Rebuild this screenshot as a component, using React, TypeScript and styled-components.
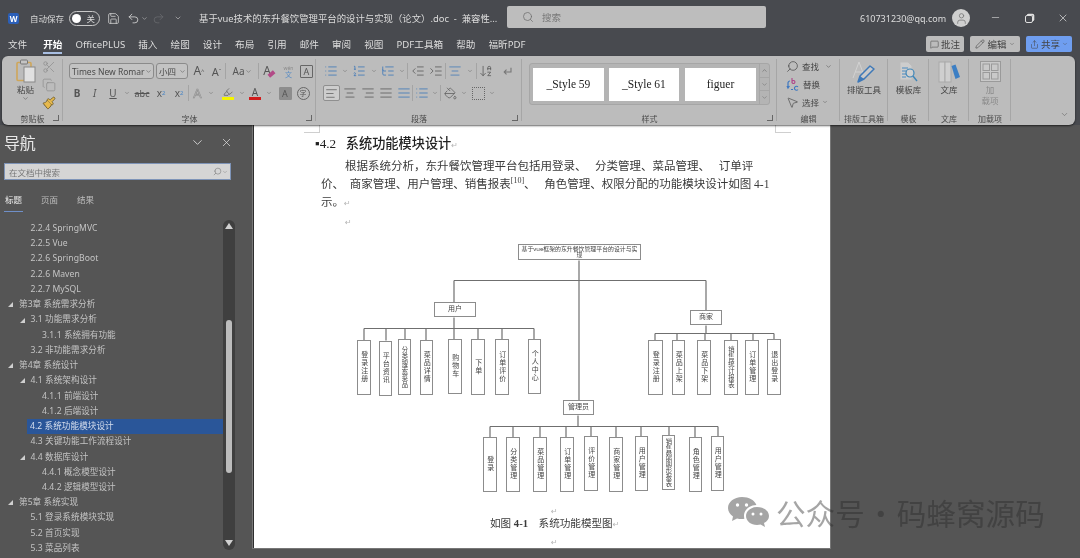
import React from 'react';
import styled, { createGlobalStyle } from 'styled-components';
import {
  AlignCenter,
  AlignJustify,
  AlignLeft,
  AlignRight,
  ArrowDownAZ,
  ChevronDown,
  ChevronUp,
  Copy,
  Highlighter,
  IndentDecrease,
  IndentIncrease,
  List,
  ListOrdered,
  ListTree,
  MessageSquare,
  Minus,
  MousePointer2,
  PaintBucket,
  Paintbrush,
  Pencil,
  Redo2,
  Save,
  Scissors,
  Search,
  Share,
  Undo2,
  User,
  X,
} from 'lucide-react';

const UI_FONT = '"Noto Sans", "Noto Sans CJK SC", sans-serif';
const DOC_FONT = '"Liberation Serif", "Noto Sans CJK SC", serif';

const GlobalStyle = createGlobalStyle`
  html, body { margin: 0; padding: 0; background: #555; }
  * { box-sizing: border-box; }
`;

const Window = styled.div`
  position: relative;
  width: 1080px;
  height: 558px;
  overflow: hidden;
  display: flex;
  flex-direction: column;
  background: #484a4f;
  font-family: ${UI_FONT};
  filter: blur(0.35px);
`;

/* title bar */
const TitleBar = styled.header`
  height: 36px;
  flex: none;
  display: flex;
  align-items: center;
  color: #d8d8d8;
  font-size: 8.5px;
`;

const TitleSlot = styled.div<{ $x: number }>`
  margin-left: ${(p) => p.$x}px;
  display: flex;
  align-items: center;
  flex: none;
`;

const WordBadge = styled.div`
  width: 11px;
  height: 11px;
  background: #2b5fb8;
  border-radius: 2px;
  color: #fff;
  font-size: 8px;
  font-weight: 700;
  line-height: 11px;
  text-align: center;
`;

const Toggle = styled.div`
  width: 31px;
  height: 15px;
  border: 1px solid #c9c9c9;
  border-radius: 8px;
  display: flex;
  align-items: center;
  justify-content: space-between;
  padding: 0 4px 0 2px;
  font-size: 8.5px;
  &::before {
    content: '';
    width: 9px;
    height: 9px;
    border-radius: 50%;
    background: #fff;
  }
`;

const TitleText = styled.div`
  width: 272px;
  font-size: 9.4px;
  white-space: pre;
  color: #dcdcdc;
`;

const SearchBox = styled.div`
  width: 259px;
  height: 22px;
  margin-left: 18px;
  margin-top: -3px;
  background: #bdbdbd;
  border-radius: 2px;
  display: flex;
  align-items: center;
  padding-left: 15px;
  gap: 8px;
  color: #777;
  font-size: 9.5px;
`;

const Email = styled.div`
  margin-left: 94px;
  width: 86px;
  font-size: 9px;
  white-space: nowrap;
  color: #dedede;
`;

const Avatar = styled.div`
  width: 18px;
  height: 18px;
  margin-left: 6px;
  border-radius: 50%;
  background: #cfcfcf;
  color: #777;
  display: flex;
  align-items: center;
  justify-content: center;
`;

const WinButtons = styled.div`
  margin-left: 20px;
  width: 79px;
  display: flex;
  justify-content: space-between;
  color: #e0e0e0;
`;

const RestoreGlyph = styled.div`
  width: 8px;
  height: 8px;
  margin-top: 3px;
  border: 1.3px solid #e0e0e0;
  border-radius: 2px;
  box-shadow: 1.5px -1.5px 0 -0.2px #e0e0e0;
`;

/* tab row */
const TabRow = styled.nav`
  height: 20px;
  flex: none;
  display: flex;
  align-items: flex-start;
  padding: 1px 8px 0;
  gap: 13.1px;
`;

const TabItem = styled.div<{ $active?: boolean }>`
  font-size: 9.6px;
  line-height: 15px;
  height: 17px;
  color: ${(p) => (p.$active ? '#fff' : '#dedede')};
  font-weight: ${(p) => (p.$active ? 700 : 400)};
  border-bottom: 2px solid ${(p) => (p.$active ? '#a9bfe3' : 'transparent')};
  margin-left: ${(p) => (p.$active ? 3 : 0)}px;
`;

const TabActions = styled.div`
  margin-left: auto;
  margin-top: -1px;
  display: flex;
  gap: 6px;
`;

const TabButton = styled.div<{ $w: number; $accent?: boolean }>`
  width: ${(p) => p.$w}px;
  height: 16px;
  border-radius: 2px;
  background: ${(p) => (p.$accent ? '#6f9ef0' : '#bcbcbc')};
  color: #444;
  font-size: 9.5px;
  display: flex;
  align-items: center;
  justify-content: center;
  gap: 2px;
`;

/* ribbon */
const Ribbon = styled.div`
  height: 69px;
  flex: none;
  margin: 0 5px 0 2px;
  background: #bcbcbc;
  border-radius: 6px;
  box-shadow: 0 1px 2px rgba(0, 0, 0, 0.6);
  display: flex;
  position: relative;
  z-index: 2;
  color: #4d4d4d;
  font-size: 8.5px;
`;

const Group = styled.section<{ $w: number }>`
  width: ${(p) => p.$w}px;
  flex: none;
  display: flex;
  flex-direction: column;
  position: relative;
  &::after {
    content: '';
    position: absolute;
    right: 0;
    top: 3px;
    bottom: 4px;
    width: 1px;
    background: #a6a6a6;
  }
`;

const GroupBody = styled.div<{ $pad?: string }>`
  height: 55px;
  padding: ${(p) => p.$pad || '7px 0 0 6px'};
  display: flex;
  flex-direction: column;
  gap: 6px;
`;

const GroupFoot = styled.div`
  height: 14px;
  display: grid;
  grid-template-columns: 1fr auto 1fr;
  align-items: center;
  padding: 0 4px;
  font-size: 8px;
  color: #4a4a4a;
  white-space: nowrap;
`;

const FootLabel = styled.span`
  grid-column: 2;
`;

const Launcher = styled.div`
  grid-column: 3;
  justify-self: end;
  width: 6px;
  height: 6px;
  border-left: 1px solid #666;
  border-bottom: 1px solid #666;
  transform: scaleX(-1);
`;

const ToolRow = styled.div`
  height: 16px;
  display: flex;
  align-items: center;
`;

const Cell = styled.div<{ $w: number; $on?: boolean; $tint?: string }>`
  width: ${(p) => p.$w}px;
  height: 16px;
  flex: none;
  display: flex;
  align-items: center;
  justify-content: center;
  color: ${(p) => p.$tint || '#555'};
  border-radius: 2px;
  ${(p) => (p.$on ? 'background:#cdcdcd;border:1px solid #8f8f8f;' : '')}
`;

const Divider = styled.div`
  width: 1px;
  height: 16px;
  flex: none;
  background: #a4a4a4;
`;

const Select = styled.div<{ $w: number }>`
  width: ${(p) => p.$w}px;
  height: 16px;
  flex: none;
  margin-right: 2px;
  border: 1px solid #8b8b8b;
  border-radius: 3px;
  display: flex;
  align-items: center;
  justify-content: space-between;
  padding: 0 1px 0 2px;
  font-size: 8.5px;
  color: #4a4a4a;
  white-space: nowrap;
  overflow: hidden;
  background: #c3c3c3;
`;

const Glyph = styled.span<{ $size?: number; $weight?: number; $color?: string; $italic?: boolean; $line?: string; $hollow?: boolean }>`
  font-family: ${UI_FONT};
  font-size: ${(p) => p.$size || 10}px;
  font-weight: ${(p) => p.$weight || 400};
  color: ${(p) => (p.$hollow ? 'transparent' : p.$color || '#555')};
  font-style: ${(p) => (p.$italic ? 'italic' : 'normal')};
  text-decoration: ${(p) => p.$line || 'none'};
  line-height: 1;
  ${(p) => (p.$hollow ? '-webkit-text-stroke: 0.6px #8e8e8e;' : '')}
`;

const Tiny = styled.sup<{ $color?: string }>`
  font-size: 6px;
  color: ${(p) => p.$color || '#555'};
`;

const TinySub = styled.sub`
  font-size: 6px;
  color: #4a86c5;
`;

const BarGlyph = styled.div<{ $bar: string }>`
  display: flex;
  flex-direction: column;
  align-items: center;
  font-size: 10px;
  line-height: 10px;
  color: #555;
  width: 12px;
  &::after {
    content: '';
    width: 12px;
    height: 3px;
    background: ${(p) => p.$bar};
  }
`;

const BoxGlyph = styled.div<{ $round?: boolean; $fill?: boolean; $dotted?: boolean }>`
  width: 13px;
  height: 13px;
  border: 1px ${(p) => (p.$dotted ? 'dotted' : 'solid')} ${(p) => (p.$fill ? '#8d8d8d' : '#666')};
  border-radius: ${(p) => (p.$round ? '50%' : '1px')};
  background: ${(p) => (p.$fill ? '#8d8d8d' : 'transparent')};
  color: #555;
  font-size: ${(p) => (p.$round ? 7 : 9)}px;
  line-height: 11px;
  text-align: center;
`;

const RubyGlyph = styled.div`
  display: flex;
  flex-direction: column;
  align-items: center;
  font-size: 5px;
  line-height: 6px;
  color: #888;
  span {
    font-size: 7px;
    line-height: 7px;
    color: #5b8dc4;
  }
`;

const EraserMark = styled.span`
  width: 7px;
  height: 4px;
  margin: 6px 0 0 -3px;
  background: #b24a87;
  transform: rotate(-40deg);
`;

const ClipLayout = styled.div`
  height: 55px;
  padding: 3px 0 0 8px;
  display: flex;
`;

const PasteCol = styled.div`
  width: 31px;
  display: flex;
  flex-direction: column;
  align-items: center;
  line-height: 10px;
  font-size: 8.5px;
  color: #444;
`;

const PasteLabel = styled.div`
  margin-top: 2px;
`;

const ClipTools = styled.div`
  width: 16px;
  display: flex;
  flex-direction: column;
  align-items: center;
  gap: 4px;
  padding-top: 1px;
`;

const Gallery = styled.div`
  width: 241px;
  height: 42px;
  margin: 7px 0 6px 7px;
  border: 1px solid #a6a6a6;
  border-radius: 3px;
  background: #b4b4b4;
  display: flex;
  align-items: center;
  padding-left: 3px;
`;

const StyleCell = styled.div<{ $w: number; $gap: number }>`
  width: ${(p) => p.$w}px;
  margin-right: ${(p) => p.$gap}px;
  height: 33px;
  flex: none;
  background: #fff;
  color: #222;
  font-family: ${DOC_FONT};
  font-size: 11.5px;
  display: flex;
  align-items: center;
  justify-content: center;
`;

const GalleryScroll = styled.div`
  flex: 1;
  align-self: stretch;
  display: flex;
  flex-direction: column;
  border-left: 1px solid #a6a6a6;
`;

const GalleryStep = styled.div`
  flex: 1;
  display: flex;
  align-items: center;
  justify-content: center;
  color: #666;
  border-bottom: 1px solid #a6a6a6;
  &:last-child { border-bottom: none; }
`;

const EditBody = styled.div`
  height: 55px;
  padding: 1px 0 0 9px;
`;

const EditRow = styled.div`
  height: 18px;
  display: flex;
  align-items: center;
  gap: 3px;
  color: #444;
`;

const EditCaret = styled.span`
  display: flex;
  margin-left: 3px;
`;

const MirrorSearch = styled(Search)`
  transform: scaleX(-1);
`;

const BigTool = styled.div<{ $dim?: boolean }>`
  height: 55px;
  padding-top: 5px;
  display: flex;
  flex-direction: column;
  align-items: center;
  line-height: 11px;
  text-align: center;
  color: ${(p) => (p.$dim ? '#8a8a8a' : '#444')};
`;

const BigIcon = styled.div`
  height: 22px;
  margin-bottom: 1px;
  display: flex;
`;

const RibbonEnd = styled.div`
  flex: 1;
  display: flex;
  align-items: flex-end;
  justify-content: flex-end;
  padding: 0 6px 6px 0;
  color: #666;
`;

/* body */
const Workspace = styled.main`
  flex: 1;
  min-height: 0;
  display: flex;
  background: #555;
`;

const NavPane = styled.aside`
  width: 243px;
  flex: none;
  display: flex;
  flex-direction: column;
  color: #c8c8c8;
`;

const NavHead = styled.div`
  height: 38px;
  flex: none;
  display: flex;
  align-items: center;
  padding: 0 10px 4px 4px;
  color: #e6e6e6;
`;

const NavTitle = styled.div`
  font-size: 16px;
  margin-right: auto;
  letter-spacing: -0.3px;
  color: #e8e8e8;
`;

const NavClose = styled(X)`
  margin-left: 15px;
`;

const NavSearch = styled.div`
  width: 227px;
  height: 17px;
  flex: none;
  margin-left: 4px;
  background: #d5d5d5;
  border: 1px solid #7e94b8;
  display: flex;
  align-items: center;
  justify-content: space-between;
  padding: 0 2px 0 4px;
  font-size: 8.5px;
  color: #777;
`;

const NavSearchTools = styled.span`
  display: flex;
  align-items: center;
`;

const NavTabs = styled.div`
  height: 31px;
  flex: none;
  margin-left: 5px;
  display: flex;
  gap: 17px;
  padding-top: 13px;
`;

const NavTab = styled.div<{ $active?: boolean }>`
  font-size: 8.5px;
  line-height: 13px;
  height: 19px;
  width: 19px;
  margin-left: ${(p) => (p.$active ? -1 : 0)}px;
  text-align: center;
  color: ${(p) => (p.$active ? '#ececec' : '#bdbdbd')};
  border-bottom: 1.5px solid ${(p) => (p.$active ? '#6f8fc8' : 'transparent')};
`;

const TreeArea = styled.div`
  flex: 1;
  min-height: 0;
  display: flex;
  padding-top: 10px;
`;

const Tree = styled.ul`
  width: 223px;
  margin: 0;
  padding: 0;
  list-style: none;
  overflow: hidden;
  font-size: 8.6px;
  letter-spacing: 0.05px;
  color: #c4c4c4;
`;

const TreeRow = styled.li<{ $level: number; $selected?: boolean }>`
  height: 15.24px;
  line-height: 15.24px;
  display: flex;
  align-items: center;
  white-space: nowrap;
  margin-left: ${(p) => (p.$selected ? 27 : 0)}px;
  padding-left: ${(p) => (p.$selected ? 3 : 6 + p.$level * 11.5)}px;
  background: ${(p) => (p.$selected ? '#2a5699' : 'transparent')};
  color: ${(p) => (p.$selected ? '#d6dfee' : 'inherit')};
`;

const Twist = styled.span<{ $open?: boolean }>`
  width: 13px;
  flex: none;
  display: flex;
  padding-left: 2px;
  &::before {
    content: '';
    display: ${(p) => (p.$open ? 'block' : 'none')};
    border-left: 5px solid transparent;
    border-bottom: 5px solid #cfcfcf;
  }
`;

const ScrollTrack = styled.div`
  width: 12px;
  height: 330px;
  margin-top: -1px;
  background: #3f3f3f;
  border-radius: 6px;
  display: flex;
  flex-direction: column;
  align-items: center;
  padding-top: 3px;
`;

const ScrollThumb = styled.div`
  width: 6px;
  height: 153px;
  margin-top: 91px;
  margin-bottom: auto;
  background: #bcbcbc;
  border-radius: 3px;
`;

const ScrollCaret = styled.div<{ $down?: boolean }>`
  width: 0;
  height: 0;
  border-left: 4px solid transparent;
  border-right: 4px solid transparent;
  ${(p) => (p.$down ? 'border-top: 6px solid #d0d0d0; margin-bottom: 4px;' : 'border-bottom: 6px solid #d0d0d0;')}
`;

const DocArea = styled.div`
  flex: 1;
  min-width: 0;
  padding-left: 10px;
`;

const Page = styled.article`
  position: relative;
  width: 577px;
  height: 423px;
  background: #fff;
  border-left: 1px solid #2e2e2e;
  box-shadow: 0 0 0 1px #777;
  padding: 8px 0 0 67px;
  font-family: ${DOC_FONT};
  color: #3a3a3a;
`;

const CropMark = styled.div<{ $right?: boolean }>`
  position: absolute;
  top: 0;
  width: 16px;
  height: 8px;
  border-bottom: 1px solid #cfcfcf;
  ${(p) =>
    p.$right
      ? 'left: 521px; border-left: 1px solid #cfcfcf;'
      : 'left: 50px; border-right: 1px solid #cfcfcf;'}
`;

const Mark = styled.span`
  font-family: "DejaVu Sans", sans-serif;
  font-size: 8px;
  color: #b5b5b5;
  font-weight: 400;
`;

const Heading = styled.h2`
  margin: 0 0 3px -6px;
  height: 21px;
  line-height: 21px;
  font-size: 13.2px;
  font-weight: 500;
  white-space: pre;
  color: #222;
`;

const HeadingNumber = styled.span`
  margin-right: 3px;
`;

const BodyLine = styled.p<{ $indent?: boolean }>`
  margin: 0;
  height: 18.2px;
  line-height: 18.2px;
  font-size: 11.5px;
  white-space: pre;
  padding-left: ${(p) => (p.$indent ? 24 : 0)}px;
  sup {
    font-size: 8px;
    line-height: 0;
  }
`;

const Diagram = styled.figure`
  position: relative;
  margin: 0 0 0 -67px;
  height: 271px;
  width: 577px;
  font-family: ${UI_FONT};
`;

const Wires = styled.svg`
  position: absolute;
  left: 0;
  top: 0;
`;

const NodeBox = styled.div<{ $x: number; $y: number; $w: number; $h: number; $v?: boolean; $tight?: boolean; $small?: boolean }>`
  position: absolute;
  left: ${(p) => p.$x}px;
  top: ${(p) => p.$y}px;
  width: ${(p) => p.$w}px;
  height: ${(p) => p.$h}px;
  background: #fff;
  border: 1.5px solid #8c8c8c;
  display: flex;
  align-items: center;
  justify-content: center;
  text-align: center;
  padding: ${(p) => (p.$small ? '0 1px' : '0')};
  font-size: ${(p) => (p.$small ? 5.9 : p.$tight ? 6.3 : 7)}px;
  line-height: ${(p) => (p.$small ? 6 : 7.6)}px;
  color: #444;
  ${(p) => (p.$v ? `writing-mode: vertical-rl; text-orientation: upright; letter-spacing: ${p.$tight ? 0.7 : 1}px;` : '')}
`;

const CaptionMark = styled.div`
  height: 15.5px;
  line-height: 15.5px;
  margin-left: 230px;
`;

const Caption = styled.p`
  margin: 0 0 0 169px;
  height: 16px;
  line-height: 16px;
  font-size: 10.6px;
  white-space: pre;
`;

const Watermark = styled.div`
  position: absolute;
  left: 727px;
  top: 495px;
  display: flex;
  align-items: center;
  gap: 7px;
  color: rgba(40, 40, 40, 0.42);
  font-family: "Noto Sans CJK SC", sans-serif;
  font-size: 29.6px;
  line-height: 36px;
  white-space: pre;
  z-index: 3;
`;

const WatermarkDot = styled.span`
  display: inline-block;
  width: 32px;
  text-align: center;
`;

const OX = 253;
const OY = 229;

const chev = (size = 8) => <ChevronDown size={size} strokeWidth={1.6} />;

function PasteIcon() {
  return (
    <svg width="20" height="24" viewBox="0 0 20 24">
      <rect x="1" y="3.5" width="14" height="18" rx="1" fill="none" stroke="#cfa65a" strokeWidth="1.6" />
      <rect x="4.5" y="1" width="7" height="4" rx="1" fill="#c4c4c4" stroke="#777" strokeWidth="1" />
      <rect x="8" y="8" width="11" height="15" fill="#e0e0e0" stroke="#888" strokeWidth="1" />
    </svg>
  );
}

function ReplaceIcon() {
  return (
    <svg width="14" height="14" viewBox="0 0 14 14">
      <path d="M6 1v5M6 4.500a1.500 1.500 0 1 1 0 1" fill="none" stroke="#b0468a" strokeWidth="1.100" />
      <path d="M12 10a2 2 0 1 0 0 2.500" fill="none" stroke="#3f78c0" strokeWidth="1.100" />
      <path d="M2 11V6a2 2 0 0 1 2-2M1 9l1 2 1.500-2M7 12.500H5" fill="none" stroke="#3f78c0" strokeWidth="1.200" />
    </svg>
  );
}

function LayoutToolIcon() {
  return (
    <svg width="24" height="22" viewBox="0 0 24 22">
      <path d="M1 17L7 1l6 16M3.500 11h7" fill="none" stroke="#d2d2d2" strokeWidth="1" />
      <path d="M6 21l2-6L18 5l4 3-10 10z" fill="#c9c9c9" stroke="#3f79b8" strokeWidth="1.500" strokeLinejoin="round" />
      <path d="M6 21l2-6 4 3z" fill="#3f79b8" />
    </svg>
  );
}

function TemplateIcon() {
  return (
    <svg width="19" height="22" viewBox="0 0 19 22">
      <path d="M1 1h8l4 4v14H1z" fill="#cdcdcd" stroke="#bdbdbd" />
      <path d="M3 7h6M3 10h4M3 13h4M3 16h4" stroke="#4a8ac0" strokeWidth="1" />
      <circle cx="11" cy="12" r="4" fill="#d0d0d0" stroke="#3f86b8" strokeWidth="1.200" />
      <path d="M14 15l4 5" stroke="#3f86b8" strokeWidth="1.400" />
    </svg>
  );
}

function LibraryIcon() {
  return (
    <svg width="22" height="22" viewBox="0 0 22 22">
      <rect x="1" y="1" width="6" height="20" fill="#cfcfcf" stroke="#a9a9a9" />
      <rect x="7" y="1" width="6" height="20" fill="#cfcfcf" stroke="#a9a9a9" />
      <path d="M13.500 5l4-1.500 4.500 12.500-4.500 2z" fill="#3d7fc4" />
    </svg>
  );
}

function AddinIcon() {
  return (
    <svg width="21" height="21" viewBox="0 0 21 21" fill="none" stroke="#9a9a9a">
      <rect x="0.500" y="0.500" width="20" height="20" fill="#c9c9c9" />
      <rect x="3" y="3" width="6.500" height="6.500" />
      <rect x="11.500" y="3" width="6.500" height="6.500" />
      <rect x="3" y="11.500" width="6.500" height="6.500" />
      <rect x="11.500" y="11.500" width="6.500" height="6.500" />
    </svg>
  );
}

function WeChatIcon() {
  return (
    <svg width="42" height="34" viewBox="0 0 42 34" fill="currentColor">
      <path d="M15 1C7 1 1 6 1 12c0 3.600 2 6.500 5 8.500L5 25l5-2.600c1.500.4 3 .6 5 .6 1 0 1.600 0 2.400-.2-.3-1-.4-2-.4-3 0-6 5.600-10.800 12.400-10.800C27.600 4 22 1 15 1z" />
      <path d="M30 11c-6 0-11 4-11 9s5 9 11 9c1.300 0 2.500-.2 3.600-.5L38 31l-1-4c3-1.600 5-4 5-7 0-5-5-9-12-9z" />
      <circle cx="10.500" cy="9" r="1.700" fill="#fff" />
      <circle cx="19.500" cy="9" r="1.700" fill="#fff" />
      <circle cx="26" cy="18" r="1.500" fill="#fff" />
      <circle cx="34" cy="18" r="1.500" fill="#fff" />
    </svg>
  );
}

const tabs = ['文件', '开始', 'OfficePLUS', '插入', '绘图', '设计', '布局', '引用', '邮件', '审阅', '视图', 'PDF工具箱', '帮助', '福昕PDF'];

const treeRows: { level: number; text: string; open?: boolean; selected?: boolean }[] = [
  { level: 1, text: '2.2.4 SpringMVC' },
  { level: 1, text: '2.2.5 Vue' },
  { level: 1, text: '2.2.6 SpringBoot' },
  { level: 1, text: '2.2.6 Maven' },
  { level: 1, text: '2.2.7 MySQL' },
  { level: 0, text: '第3章 系统需求分析', open: true },
  { level: 1, text: '3.1 功能需求分析', open: true },
  { level: 2, text: '3.1.1 系统拥有功能' },
  { level: 1, text: '3.2 非功能需求分析' },
  { level: 0, text: '第4章 系统设计', open: true },
  { level: 1, text: '4.1 系统架构设计', open: true },
  { level: 2, text: '4.1.1 前端设计' },
  { level: 2, text: '4.1.2 后端设计' },
  { level: 1, text: '4.2 系统功能模块设计', selected: true },
  { level: 1, text: '4.3 关键功能工作流程设计' },
  { level: 1, text: '4.4 数据库设计', open: true },
  { level: 2, text: '4.4.1 概念模型设计' },
  { level: 2, text: '4.4.2 逻辑模型设计' },
  { level: 0, text: '第5章 系统实现', open: true },
  { level: 1, text: '5.1 登录系统模块实现' },
  { level: 1, text: '5.2 首页实现' },
  { level: 1, text: '5.3 菜品列表' },
];

// diagram boxes, in screen coordinates: x1, y1, x2, y2, text
type Box = [number, number, number, number, string];

const flatBoxes: Box[] = [
  [517, 243, 640, 259, '基于vue框架的东升餐饮管理平台的设计与实现'],
  [433, 301, 475, 316, '用户'],
  [689, 309, 721, 324, '商家'],
  [562, 399, 593, 414, '管理员'],
];

const tallBoxes: Box[] = [
  [356, 339, 370, 394, '登录注册'],
  [378, 340, 391, 395, '平台资讯'],
  [397, 338, 410, 394, '分类搜索菜品'],
  [419, 339, 432, 394, '菜品详情'],
  [447, 338, 461, 393, '购物车'],
  [470, 338, 484, 394, '下单'],
  [494, 338, 508, 394, '订单评价'],
  [527, 338, 540, 393, '个人中心'],
  [647, 339, 662, 394, '登录注册'],
  [671, 339, 684, 394, '菜品上架'],
  [696, 339, 710, 394, '菜品下架'],
  [723, 339, 737, 394, '销售统计报表'],
  [744, 339, 758, 394, '订单管理'],
  [766, 338, 780, 394, '退出登录'],
  [482, 436, 496, 491, '登录'],
  [505, 436, 519, 491, '分类管理'],
  [532, 436, 546, 491, '菜品管理'],
  [559, 436, 573, 491, '订单管理'],
  [583, 435, 597, 490, '评价管理'],
  [608, 436, 622, 491, '商家管理'],
  [634, 435, 647, 490, '用户管理'],
  [661, 434, 674, 489, '销售额图形报表'],
  [688, 436, 701, 491, '角色管理'],
  [710, 435, 723, 490, '用户管理'],
];

const wires: [number, number, number, number][] = [
  [578, 259, 578, 399],
  [453, 279, 705, 279],
  [453, 279, 453, 301],
  [705, 279, 705, 309],
  [453, 316, 453, 327],
  [363, 327, 533, 327],
  ...[363, 385, 404, 425, 453, 477, 501, 533].map((x) => [x, 327, x, 339] as [number, number, number, number]),
  [705, 324, 705, 332],
  [654, 332, 773, 332],
  ...[654, 676, 704, 730, 752, 773].map((x) => [x, 332, x, 339] as [number, number, number, number]),
  [577, 414, 577, 425],
  [489, 425, 717, 425],
  ...[489, 512, 539, 565, 590, 615, 640, 668, 694, 717].map((x) => [x, 425, x, 436] as [number, number, number, number]),
];

function App() {
  return (
    <Window>
      <GlobalStyle />

      <TitleBar>
        <TitleSlot $x={8}>
          <WordBadge>W</WordBadge>
        </TitleSlot>
        <TitleSlot $x={11}>自动保存</TitleSlot>
        <TitleSlot $x={5}>
          <Toggle>关</Toggle>
        </TitleSlot>
        <TitleSlot $x={7}>
          <Save size={13} strokeWidth={1.4} />
        </TitleSlot>
        <TitleSlot $x={7}>
          <Undo2 size={13} strokeWidth={1.5} />
        </TitleSlot>
        <TitleSlot $x={1}>{chev(7)}</TitleSlot>
        <TitleSlot $x={4}>
          <Redo2 size={13} strokeWidth={1.3} color="#6c6e72" />
        </TitleSlot>
        <TitleSlot $x={9}>{chev(8)}</TitleSlot>
        <TitleSlot $x={17}>
          <TitleText>基于vue技术的东升餐饮管理平台的设计与实现（论文）.doc  -  兼容性...</TitleText>
        </TitleSlot>
        <TitleSlot $x={9}>{chev(9)}</TitleSlot>
        <SearchBox>
          <Search size={12} strokeWidth={1.5} color="#6e6e6e" />
          搜索
        </SearchBox>
        <Email>610731230@qq.com</Email>
        <Avatar>
          <User size={13} strokeWidth={1.5} />
        </Avatar>
        <WinButtons>
          <Minus size={11} strokeWidth={1.3} />
          <RestoreGlyph />
          <X size={12} strokeWidth={1.4} />
        </WinButtons>
      </TitleBar>

      <TabRow>
        {tabs.map((t) => (
          <TabItem
            key={t}
            $active={t === '开始'}
          >
            {t}
          </TabItem>
        ))}
        <TabActions>
          <TabButton $w={38}>
            <MessageSquare size={9} strokeWidth={1.4} />
            批注
          </TabButton>
          <TabButton $w={50}>
            <Pencil size={10} strokeWidth={1.4} />
            编辑{chev(6)}
          </TabButton>
          <TabButton $w={46} $accent>
            <Share size={9} strokeWidth={1.4} />
            共享{chev(6)}
          </TabButton>
        </TabActions>
      </TabRow>

      <Ribbon>
        <Group $w={61}>
          <ClipLayout>
            <PasteCol>
              <PasteIcon />
              <PasteLabel>粘贴</PasteLabel>
              {chev(7)}
            </PasteCol>
            <ClipTools>
              <Scissors size={14} strokeWidth={1.2} color="#8b8b8b" />
              <Copy size={14} strokeWidth={1.2} color="#8b8b8b" />
              <Paintbrush size={14} strokeWidth={1.5} color="#6b5a2c" fill="#e7b94d" />
            </ClipTools>
          </ClipLayout>
          <GroupFoot>
            <FootLabel>剪贴板</FootLabel>
            <Launcher />
          </GroupFoot>
        </Group>

        <Group $w={253}>
          <GroupBody>
            <ToolRow>
              <Select $w={85}>Times New Romar{chev(7)}</Select>
              <Select $w={32}>小四{chev(7)}</Select>
              <Cell $w={18}>
                <Glyph $size={12}>A</Glyph>
                <Tiny>^</Tiny>
              </Cell>
              <Cell $w={17}>
                <Glyph $size={11}>A</Glyph>
                <Tiny>ˇ</Tiny>
              </Cell>
              <Divider />
              <Cell $w={32}>
                <Glyph $size={10}>Aa</Glyph>
                {chev(7)}
              </Cell>
              <Divider />
              <Cell $w={20}>
                <Glyph $size={12}>A</Glyph>
                <EraserMark />
              </Cell>
              <Cell $w={19}>
                <RubyGlyph>
                  wén
                  <span>文</span>
                </RubyGlyph>
              </Cell>
              <Cell $w={17}>
                <BoxGlyph>A</BoxGlyph>
              </Cell>
            </ToolRow>
            <ToolRow>
              <Cell $w={16}>
                <Glyph $size={10} $weight={700}>
                  B
                </Glyph>
              </Cell>
              <Cell $w={19}>
                <Glyph $size={10} $italic>
                  I
                </Glyph>
              </Cell>
              <Cell $w={18}>
                <Glyph $size={10} $line="underline">
                  U
                </Glyph>
              </Cell>
              <Cell $w={10}>{chev(6)}</Cell>
              <Cell $w={20}>
                <Glyph $size={9} $line="line-through">
                  abc
                </Glyph>
              </Cell>
              <Cell $w={18}>
                <Glyph $size={10}>x</Glyph>
                <TinySub>2</TinySub>
              </Cell>
              <Cell $w={18}>
                <Glyph $size={10}>x</Glyph>
                <Tiny $color="#4a86c5">2</Tiny>
              </Cell>
              <Divider />
              <Cell $w={17}>
                <Glyph $size={13} $hollow>
                  A
                </Glyph>
              </Cell>
              <Cell $w={10}>{chev(6)}</Cell>
              <Cell $w={4} />
              <Cell $w={16}>
                <BarGlyph $bar="#f5f500">
                  <Highlighter size={10} strokeWidth={1.6} />
                </BarGlyph>
              </Cell>
              <Cell $w={11}>{chev(6)}</Cell>
              <Cell $w={16}>
                <BarGlyph $bar="#d01c1c">A</BarGlyph>
              </Cell>
              <Cell $w={11}>{chev(6)}</Cell>
              <Cell $w={3} />
              <Cell $w={16}>
                <BoxGlyph $fill>A</BoxGlyph>
              </Cell>
              <Cell $w={2} />
              <Cell $w={16}>
                <BoxGlyph $round>字</BoxGlyph>
              </Cell>
            </ToolRow>
          </GroupBody>
          <GroupFoot>
            <FootLabel>字体</FootLabel>
            <Launcher />
          </GroupFoot>
        </Group>

        <Group $w={206}>
          <GroupBody $pad="7px 0 0 7px">
            <ToolRow>
              <Cell $w={16} $tint="#3f78b8">
                <List size={14} strokeWidth={1.4} />
              </Cell>
              <Cell $w={12}>{chev(6)}</Cell>
              <Cell $w={16} $tint="#3f78b8">
                <ListOrdered size={14} strokeWidth={1.4} />
              </Cell>
              <Cell $w={13}>{chev(6)}</Cell>
              <Cell $w={16} $tint="#3f78b8">
                <ListTree size={14} strokeWidth={1.4} />
              </Cell>
              <Cell $w={11}>{chev(6)}</Cell>
              <Divider />
              <Cell $w={19}>
                <IndentDecrease size={14} strokeWidth={1.3} />
              </Cell>
              <Cell $w={18}>
                <IndentIncrease size={14} strokeWidth={1.3} />
              </Cell>
              <Divider />
              <Cell $w={18} $tint="#3f78b8">
                <AlignCenter size={14} strokeWidth={1.3} />
              </Cell>
              <Cell $w={12}>{chev(6)}</Cell>
              <Divider />
              <Cell $w={18}>
                <ArrowDownAZ size={14} strokeWidth={1.3} />
              </Cell>
              <Cell $w={4} />
              <Cell $w={18}>
                <Glyph $size={13} $color="#777">
                  ↵
                </Glyph>
              </Cell>
            </ToolRow>
            <ToolRow>
              <Cell $w={17} $on>
                <AlignLeft size={13} strokeWidth={1.3} />
              </Cell>
              <Cell $w={19}>
                <AlignCenter size={14} strokeWidth={1.3} />
              </Cell>
              <Cell $w={18}>
                <AlignRight size={14} strokeWidth={1.3} />
              </Cell>
              <Cell $w={18}>
                <AlignJustify size={14} strokeWidth={1.3} />
              </Cell>
              <Cell $w={17} $tint="#3f78b8">
                <AlignJustify size={14} strokeWidth={1.4} />
              </Cell>
              <Divider />
              <Cell $w={17} $tint="#3f78b8">
                <List size={14} strokeWidth={1.4} />
              </Cell>
              <Cell $w={10}>{chev(6)}</Cell>
              <Divider />
              <Cell $w={18}>
                <PaintBucket size={13} strokeWidth={1.3} />
              </Cell>
              <Cell $w={10}>{chev(6)}</Cell>
              <Cell $w={18}>
                <BoxGlyph $dotted />
              </Cell>
              <Cell $w={10}>{chev(6)}</Cell>
            </ToolRow>
          </GroupBody>
          <GroupFoot>
            <FootLabel>段落</FootLabel>
            <Launcher />
          </GroupFoot>
        </Group>

        <Group $w={255}>
          <Gallery>
            <StyleCell $w={71} $gap={5}>
              _Style 59
            </StyleCell>
            <StyleCell $w={70} $gap={6}>
              _Style 61
            </StyleCell>
            <StyleCell $w={71} $gap={3}>
              figuer
            </StyleCell>
            <GalleryScroll>
              <GalleryStep>
                <ChevronUp size={7} />
              </GalleryStep>
              <GalleryStep>{chev(7)}</GalleryStep>
              <GalleryStep>{chev(7)}</GalleryStep>
            </GalleryScroll>
          </Gallery>
          <GroupFoot>
            <FootLabel>样式</FootLabel>
            <Launcher />
          </GroupFoot>
        </Group>

        <Group $w={63}>
          <EditBody>
            <EditRow>
              <MirrorSearch size={13} strokeWidth={1.3} />
              查找
              <EditCaret>{chev(7)}</EditCaret>
            </EditRow>
            <EditRow>
              <ReplaceIcon />
              替换
            </EditRow>
            <EditRow>
              <MousePointer2 size={13} strokeWidth={1.2} />
              选择{chev(6)}
            </EditRow>
          </EditBody>
          <GroupFoot>
            <FootLabel>编辑</FootLabel>
          </GroupFoot>
        </Group>

        <Group $w={48}>
          <BigTool>
            <BigIcon>
              <LayoutToolIcon />
            </BigIcon>
            排版工具
          </BigTool>
          <GroupFoot>
            <FootLabel>排版工具箱</FootLabel>
          </GroupFoot>
        </Group>

        <Group $w={41}>
          <BigTool>
            <BigIcon>
              <TemplateIcon />
            </BigIcon>
            模板库
          </BigTool>
          <GroupFoot>
            <FootLabel>模板</FootLabel>
          </GroupFoot>
        </Group>

        <Group $w={40}>
          <BigTool>
            <BigIcon>
              <LibraryIcon />
            </BigIcon>
            文库
          </BigTool>
          <GroupFoot>
            <FootLabel>文库</FootLabel>
          </GroupFoot>
        </Group>

        <Group $w={42}>
          <BigTool $dim>
            <BigIcon>
              <AddinIcon />
            </BigIcon>
            加
            <br />
            载项
          </BigTool>
          <GroupFoot>
            <FootLabel>加载项</FootLabel>
          </GroupFoot>
        </Group>

        <RibbonEnd>{chev(9)}</RibbonEnd>
      </Ribbon>

      <Workspace>
        <NavPane>
          <NavHead>
            <NavTitle>导航</NavTitle>
            <ChevronDown size={15} strokeWidth={1.3} />
            <NavClose size={13} strokeWidth={1.3} />
          </NavHead>
          <NavSearch>
            在文档中搜索
            <NavSearchTools>
              <MirrorSearch size={9} strokeWidth={1.5} />
              {chev(6)}
            </NavSearchTools>
          </NavSearch>
          <NavTabs>
            <NavTab $active>标题</NavTab>
            <NavTab>页面</NavTab>
            <NavTab>结果</NavTab>
          </NavTabs>
          <TreeArea>
            <Tree>
              {treeRows.map((r) => (
                <TreeRow
                  key={r.text}
                  $level={r.level}
                  $selected={r.selected}
                >
                  {!r.selected && <Twist $open={r.open} />}
                  {r.text}
                </TreeRow>
              ))}
            </Tree>
            <ScrollTrack>
              <ScrollCaret />
              <ScrollThumb />
              <ScrollCaret $down />
            </ScrollTrack>
          </TreeArea>
        </NavPane>

        <DocArea>
          <Page>
            <CropMark />
            <CropMark $right />
            <Heading>
              ▪<HeadingNumber>4.2</HeadingNumber>  系统功能模块设计<Mark>↵</Mark>
            </Heading>
            <BodyLine $indent>根据系统分析，东升餐饮管理平台包括用登录、   分类管理、菜品管理、   订单评</BodyLine>
            <BodyLine>
              价、  商家管理、用户管理、销售报表<sup>[10]</sup>、   角色管理、权限分配的功能模块设计如图 4-1
            </BodyLine>
            <BodyLine>
              示。<Mark>↵</Mark>
            </BodyLine>
            <BodyLine $indent>
              <Mark>↵</Mark>
            </BodyLine>
            <Diagram>
              <Wires
                width="577"
                height="271"
              >
                {wires.map(([x1, y1, x2, y2]) => (
                  <line
                    key={`${x1}-${y1}-${x2}-${y2}`}
                    x1={x1 - OX}
                    y1={y1 - OY + 0.5}
                    x2={x2 - OX}
                    y2={y2 - OY + 0.5}
                    stroke="#6f6f6f"
                    strokeWidth="1.2"
                  />
                ))}
              </Wires>
              {flatBoxes.map(([x1, y1, x2, y2, text]) => (
                <NodeBox
                  key={text}
                  $x={x1 - OX}
                  $y={y1 - OY}
                  $w={x2 - x1}
                  $h={y2 - y1}
                  $small={text.length > 10}
                >
                  {text}
                </NodeBox>
              ))}
              {tallBoxes.map(([x1, y1, x2, y2, text]) => (
                <NodeBox
                  key={`${x1}-${text}`}
                  $x={x1 - OX}
                  $y={y1 - OY}
                  $w={x2 - x1}
                  $h={y2 - y1}
                  $v
                  $tight={text.length >= 6}
                >
                  {text}
                </NodeBox>
              ))}
            </Diagram>
            <CaptionMark>
              <Mark>↵</Mark>
            </CaptionMark>
            <Caption>
              如图 <b>4-1</b>    系统功能模型图<Mark>↵</Mark>
            </Caption>
            <CaptionMark>
              <Mark>↵</Mark>
            </CaptionMark>
          </Page>
        </DocArea>
      </Workspace>

      <Watermark>
        <WeChatIcon />
        <span>
          公众号<WatermarkDot>·</WatermarkDot>码蜂窝源码
        </span>
      </Watermark>
    </Window>
  );
}

export default App;
